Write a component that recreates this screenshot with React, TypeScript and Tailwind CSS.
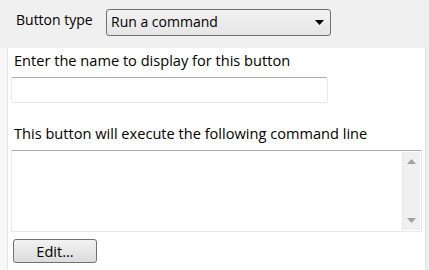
import React from 'react'

export default function App() {
    return (
        <div className="w-[429px] h-[270px] bg-[#f0f0f0] flex flex-col overflow-hidden font-['Open_Sans',sans-serif] text-[14px] text-black">
            {/* Button type row */}
            <div className="h-[48px] flex items-center pl-[16px] pb-[2px]">
                <span className="w-[90px] leading-none -mt-[6px]">Button type</span>
                <div className="w-[225px] h-[27px] rounded-[3px] border border-[#707070] bg-gradient-to-b from-[#f2f2f2] to-[#e5e5e5] flex items-center justify-between pl-[4px] pr-[6px] -mt-[2px]">
                    <span className="leading-none">Run a command</span>
                    <svg width="9" height="5" viewBox="0 0 9 5"><path d="M0 0h9L4.5 5z" fill="#000" /></svg>
                </div>
            </div>

            {/* Settings panel */}
            <div className="flex-1 flex">
                <div className="w-[8px] bg-[#f7f7f7] border-r border-[#e6e6e6]" />
                <div className="flex-1 bg-white flex flex-col pl-[3px] pt-[2px] text-[14.6px]">
                    <div className="pl-[3px] leading-[20px]">Enter the name to display for this button</div>
                    <div className="mt-[7px] w-[317px] h-[26px] border border-[#e3e9ef] border-t-[#abadb3] rounded-[2px]" />
                    <div className="mt-[20px] pl-[3px] leading-[20px]">This button will execute the following command line</div>
                    <div className="mt-[7px] w-[411px] h-[82px] border border-[#e3e9ef] border-t-[#abadb3] flex justify-end p-[1px]">
                        <div className="w-[18px] h-full bg-[#f0f0f0] border-l border-[#e8e8e8] flex flex-col items-center justify-between py-[7px]">
                            <svg width="9" height="5" viewBox="0 0 9 5"><path d="M0 5h9L4.5 0z" fill="#a0a0a0" /></svg>
                            <svg width="9" height="5" viewBox="0 0 9 5"><path d="M0 0h9L4.5 5z" fill="#a0a0a0" /></svg>
                        </div>
                    </div>
                    <button className="mt-[7px] ml-[2px] w-[84px] h-[24px] rounded-[3px] border border-[#707070] bg-gradient-to-b from-[#f2f2f2] to-[#dcdcdc] flex items-center justify-center leading-none text-[14.6px]">
                        Edit...
                    </button>
                </div>
                <div className="w-[4px] bg-[#f0f0f0] border-l border-[#e0e0e0]" />
            </div>
        </div>
    )
}
